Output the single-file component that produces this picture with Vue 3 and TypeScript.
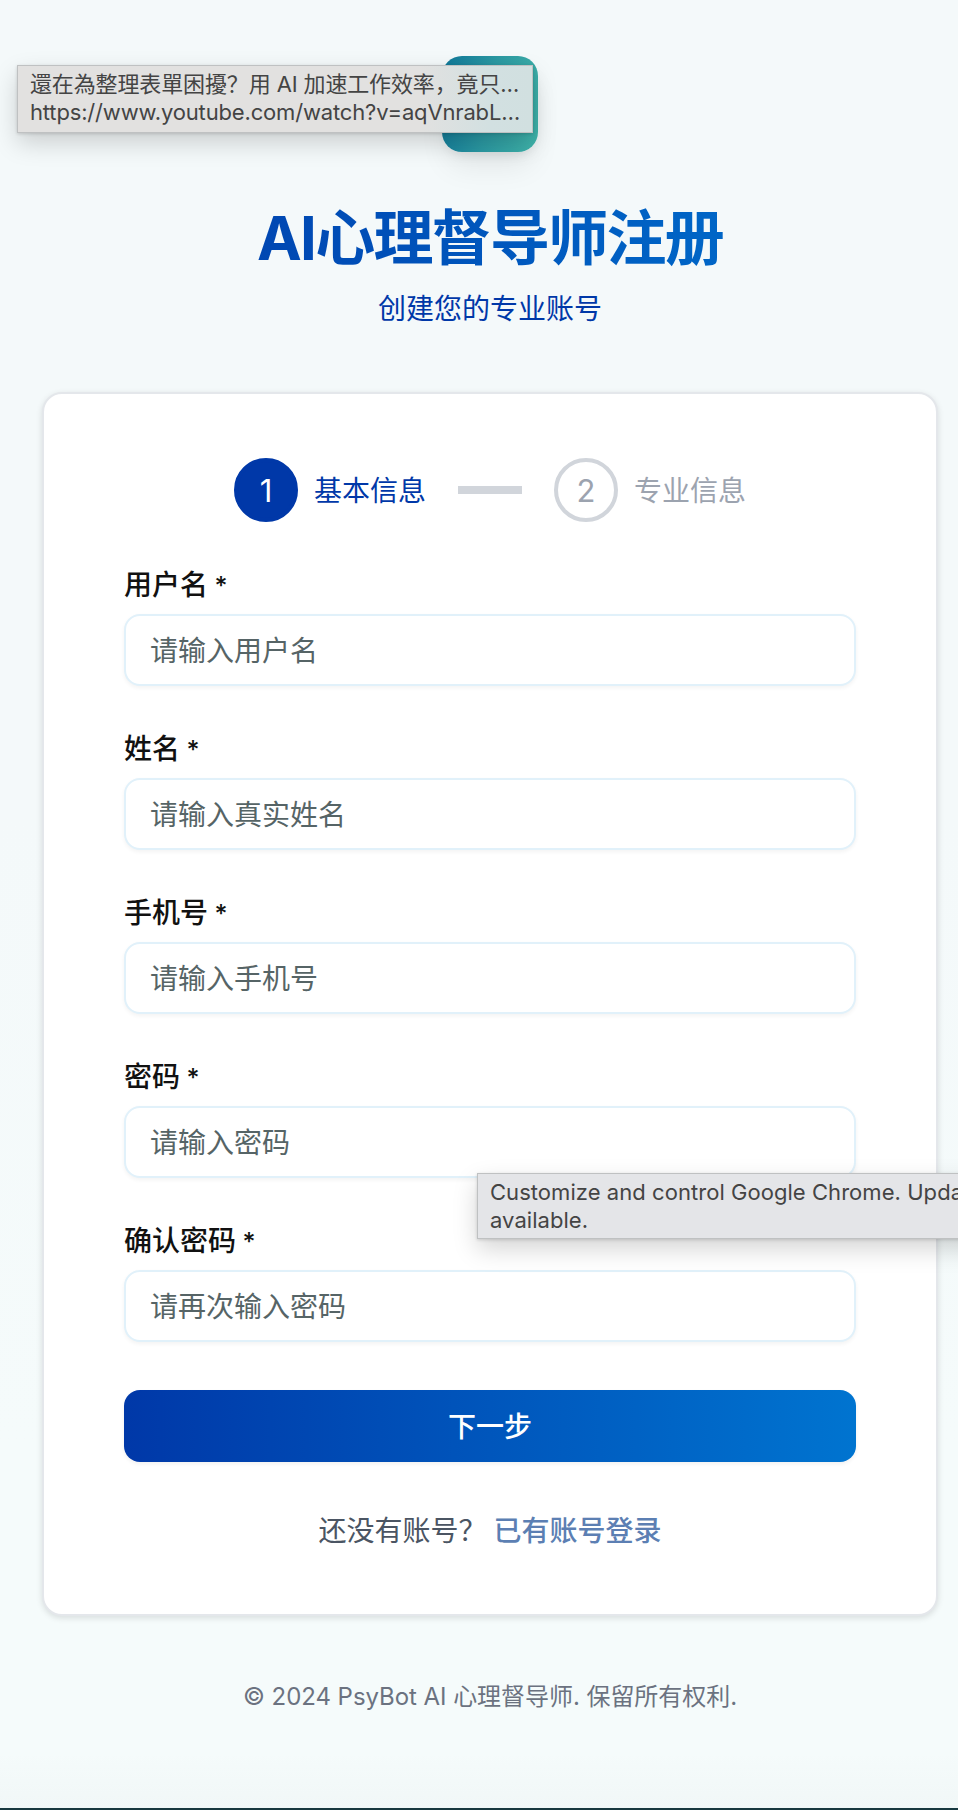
<script setup lang="ts">
interface Field {
  id: string
  label: string
  placeholder: string
  type: string
}

const fields: Field[] = [
  { id: 'username', label: '用户名', placeholder: '请输入用户名', type: 'text' },
  { id: 'realname', label: '姓名', placeholder: '请输入真实姓名', type: 'text' },
  { id: 'phone', label: '手机号', placeholder: '请输入手机号', type: 'tel' },
  { id: 'password', label: '密码', placeholder: '请输入密码', type: 'password' },
  { id: 'confirm', label: '确认密码', placeholder: '请再次输入密码', type: 'password' },
]
</script>

<template>
  <div class="page">
    <div class="content">
      <header class="header">
        <div class="logo"></div>
        <h1 class="title">AI心理督导师注册</h1>
        <p class="subtitle">创建您的专业账号</p>
      </header>

      <main class="card">
        <div class="steps">
          <span class="step-dot active">1</span>
          <span class="step-name active-name">基本信息</span>
          <span class="step-line"></span>
          <span class="step-dot">2</span>
          <span class="step-name">专业信息</span>
        </div>

        <form class="form" @submit.prevent>
          <div v-for="f in fields" :key="f.id" class="field">
            <label class="label" :for="f.id">{{ f.label }} <span class="star">*</span></label>
            <input :id="f.id" class="input" :type="f.type" :placeholder="f.placeholder" />
          </div>
          <button class="next" type="submit">下一步</button>
        </form>

        <p class="login">
          <span>还没有账号？</span>
          <a class="login-link">已有账号登录</a>
        </p>
      </main>

      <footer class="footer">© 2024 PsyBot AI 心理督导师. 保留所有权利.</footer>
    </div>

    <div class="tooltip tip-link">
      <span class="tip-title">還在為整理表單困擾？用 AI 加速工作效率，竟只…</span>
      <span class="tip-url">https://www.youtube.com/watch?v=aqVnrabL…</span>
    </div>
    <div class="tooltip tip-chrome">
      <span>Customize and control Google Chrome. Update</span>
      <span>available.</span>
    </div>
  </div>
</template>

<style>
body {
  margin: 0;
}
</style>

<style scoped>
.page {
  position: relative;
  box-sizing: border-box;
  width: 958px;
  height: 1810px;
  overflow: hidden;
  background: linear-gradient(180deg, #f4f9fa 0%, #f4f9fa 45%, #f5fbfb 80%, #f5fbfb 97%, #f1f7f7 100%);
  border-bottom: 2px solid #17383f;
  font-family: Inter, 'Noto Sans CJK SC', sans-serif;
}
.content {
  width: 896px;
  margin-left: 42px;
  padding-top: 56px;
}
.header {
  display: flex;
  flex-direction: column;
  align-items: center;
}
.logo {
  width: 96px;
  height: 96px;
  border-radius: 20px;
  background: linear-gradient(100deg, #0f7799 0%, #2b99a2 50%, #40b3a9 100%);
  box-shadow: 0 20px 30px -6px rgba(0, 0, 0, 0.08), 0 8px 12px -6px rgba(0, 0, 0, 0.08);
}
.title {
  margin: 48px 0 0;
  width: 896px;
  text-align: center;
  font-size: 60px;
  line-height: 76px;
  font-weight: 700;
  letter-spacing: -1.75px;
  background: linear-gradient(90deg, #0039a9 0%, #0074d0 100%);
  -webkit-background-clip: text;
  background-clip: text;
  color: transparent;
}
.subtitle {
  margin: 12px 0 0;
  font-size: 28px;
  line-height: 42px;
  color: #0038a8;
}
.card {
  box-sizing: border-box;
  height: 1224px;
  margin-top: 62px;
  padding: 64px 80px;
  border: 2px solid #e4e7eb;
  border-radius: 20px;
  background: #fff;
  box-shadow: 0 2px 6px rgba(0, 0, 0, 0.12);
}
.steps {
  display: flex;
  align-items: center;
  justify-content: center;
  height: 64px;
}
.step-dot {
  box-sizing: border-box;
  display: flex;
  align-items: center;
  justify-content: center;
  width: 64px;
  height: 64px;
  padding-top: 1px;
  border: 4px solid #d1d5db;
  border-radius: 50%;
  font-size: 31px;
  line-height: 40px;
  color: #9ca3af;
}
.step-dot.active {
  border-color: #0038a8;
  background: #0038a8;
  color: #fff;
}
.step-name {
  margin-left: 16px;
  padding-top: 2px;
  font-size: 28px;
  line-height: 40px;
  color: #9ca3af;
}
.step-name.active-name {
  color: #0038a8;
}
.step-line {
  width: 64px;
  height: 8px;
  margin: 0 32px;
  background: #d1d5db;
}
.form {
  display: flex;
  flex-direction: column;
  gap: 48px;
  margin-top: 48px;
}
.field {
  display: flex;
  flex-direction: column;
}
.label {
  height: 44px;
  padding-top: 1px;
  box-sizing: border-box;
  font-size: 28px;
  line-height: 28px;
  font-weight: 500;
  color: #111;
}
.star {
  margin-left: -1px;
  font-size: 25px;
  line-height: 20px;
}
.input {
  box-sizing: border-box;
  width: 100%;
  height: 72px;
  padding: 2px 24px 0;
  border: 2px solid #e1f1fa;
  border-radius: 16px;
  background: #fff;
  box-shadow: 0 2px 4px rgba(0, 0, 0, 0.05);
  font-family: inherit;
  font-size: 28px;
  color: #111;
}
.input::placeholder {
  color: #566466;
  opacity: 1;
}
.next {
  height: 72px;
  padding: 0 0 2px;
  border: 0;
  border-radius: 16px;
  background: linear-gradient(90deg, #0038a8 0%, #0074d0 100%);
  box-shadow: 0 2px 4px rgba(0, 0, 0, 0.06);
  font-family: inherit;
  font-size: 28px;
  font-weight: 500;
  color: #fff;
}
.login {
  display: flex;
  justify-content: center;
  gap: 7px;
  margin: 49px 0 0;
  font-size: 28px;
  line-height: 40px;
  color: #4b5563;
}
.login-link {
  font-weight: 500;
  color: #5c7fb3;
}
.footer {
  margin-top: 65px;
  text-align: center;
  font-size: 24px;
  line-height: 32px;
  letter-spacing: -0.05px;
  color: #6b7280;
}
.tooltip {
  position: absolute;
  box-sizing: border-box;
  display: flex;
  flex-direction: column;
  border: 1px solid #bfc1c2;
  font-size: 22px;
  line-height: 28px;
  color: #444;
  white-space: nowrap;
  box-shadow: 0 10px 24px rgba(0, 0, 0, 0.17), 0 1px 3px rgba(0, 0, 0, 0.15);
}
.tip-link {
  left: 17px;
  top: 65px;
  width: 516px;
  height: 68px;
  padding: 4px 12px;
  background: linear-gradient(90deg, #e2e1e0 0%, #e2e1e0 78%, #d2e0e1 92%, #d1e0e0 100%);
}
.tip-title {
  letter-spacing: -0.13px;
}
.tip-url {
  letter-spacing: -0.16px;
}
.tip-chrome {
  left: 477px;
  top: 1173px;
  width: 520px;
  height: 66px;
  padding: 4px 12px;
  background: #e4e5e8;
  letter-spacing: 0.05px;
}
</style>
